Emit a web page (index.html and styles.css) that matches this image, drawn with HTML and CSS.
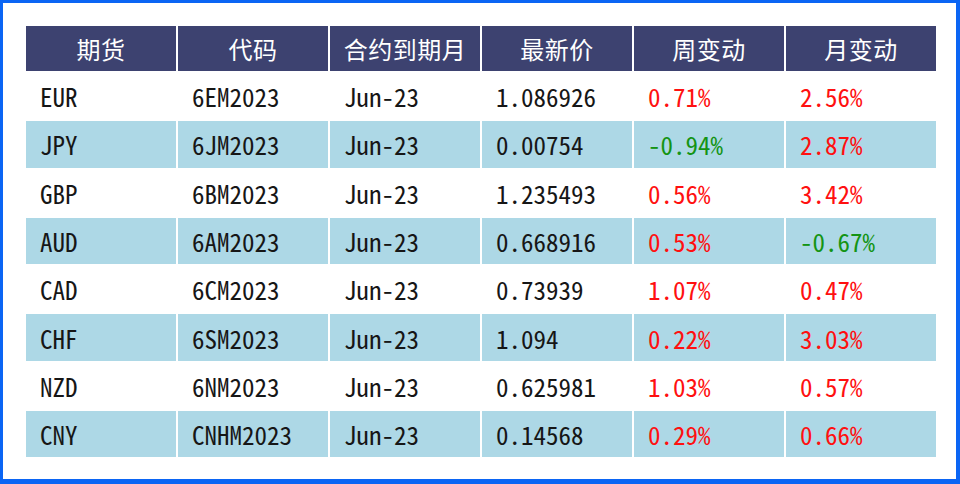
FILE: index.html
```html
<!DOCTYPE html>
<html lang="zh">
<head>
<meta charset="utf-8">
<title>期货</title>
<link rel="stylesheet" href="styles.css">
</head>
<body>
<div class="frame">
<table class="fx">
<thead>
<tr><th>期货</th><th>代码</th><th>合约到期月</th><th>最新价</th><th>周变动</th><th>月变动</th></tr>
</thead>
<tbody>
<tr><td>EUR</td><td>6EM2023</td><td>Jun-23</td><td>1.086926</td><td class="up">0.71%</td><td class="up">2.56%</td></tr>
<tr class="alt"><td>JPY</td><td>6JM2023</td><td>Jun-23</td><td>0.00754</td><td class="down">-0.94%</td><td class="up">2.87%</td></tr>
<tr><td>GBP</td><td>6BM2023</td><td>Jun-23</td><td>1.235493</td><td class="up">0.56%</td><td class="up">3.42%</td></tr>
<tr class="alt"><td>AUD</td><td>6AM2023</td><td>Jun-23</td><td>0.668916</td><td class="up">0.53%</td><td class="down">-0.67%</td></tr>
<tr><td>CAD</td><td>6CM2023</td><td>Jun-23</td><td>0.73939</td><td class="up">1.07%</td><td class="up">0.47%</td></tr>
<tr class="alt"><td>CHF</td><td>6SM2023</td><td>Jun-23</td><td>1.094</td><td class="up">0.22%</td><td class="up">3.03%</td></tr>
<tr><td>NZD</td><td>6NM2023</td><td>Jun-23</td><td>0.625981</td><td class="up">1.03%</td><td class="up">0.57%</td></tr>
<tr class="alt"><td>CNY</td><td>CNHM2023</td><td>Jun-23</td><td>0.14568</td><td class="up">0.29%</td><td class="up">0.66%</td></tr>
</tbody>
</table>
</div>
</body>
</html>
```
FILE: styles.css
```css
html, body {
  margin: 0;
  padding: 0;
  background: #ffffff;
}
.frame {
  box-sizing: border-box;
  width: 960px;
  height: 484px;
  border-style: solid;
  border-color: #0b65f4;
  border-width: 3px 4px 5px 3px;
  padding: 22px 0 0 22px;
  background: #ffffff;
}
.fx {
  border-collapse: collapse;
  table-layout: fixed;
  width: 914px;
  margin: -1px 0 0 -1px;
}
.fx th, .fx td {
  border: 2px solid #ffffff;
  height: 48.3px;
  padding: 0;
  box-sizing: border-box;
}
.fx th {
  background: #3d4270;
  color: #ffffff;
  font-family: "Noto Sans CJK SC", sans-serif;
  font-weight: 400;
  font-size: 24px;
  letter-spacing: 0.5px;
  text-align: center;
  height: 47px;
}
.fx td {
  font-family: "Noto Sans Mono CJK SC", "DejaVu Sans Mono", monospace;
  font-size: 25px;
  color: #161616;
  padding-left: 14px;
  text-align: left;
}
.fx tr.alt td {
  background: #add8e6;
}
.fx td.up {
  color: #ff1010;
}
.fx td.down {
  color: #149414;
}
```
